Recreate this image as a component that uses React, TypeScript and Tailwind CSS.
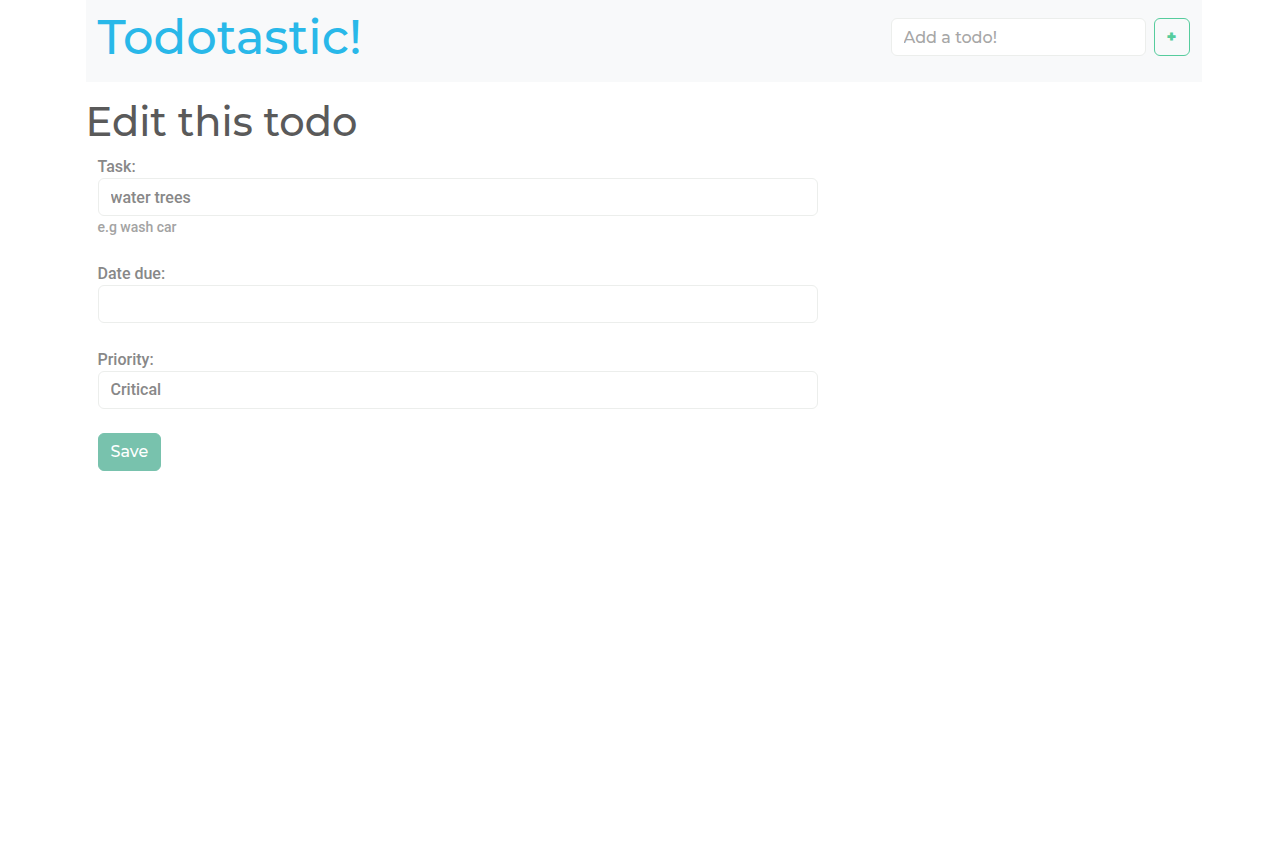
import { useState } from "react";
import type { ReactNode } from "react";

const control =
  "block h-[38px] w-full appearance-none rounded-md border border-[#eceeec] bg-white px-3 font-['Roboto',sans-serif] text-base font-medium text-[#888888] outline-none focus:border-[#78c2ad]";

function Field({ id, label, hint, children }: { id: string; label: string; hint?: string; children: ReactNode }) {
  return (
    <div className="mb-6 font-['Roboto',sans-serif]">
      <label htmlFor={id} className="block h-6 text-base leading-[26px] font-medium text-[#888888]">
        {label}
      </label>
      {children}
      {hint && <p className="h-[21px] text-sm leading-[23px] font-medium text-[#a3a3a3]">{hint}</p>}
    </div>
  );
}

export default function App() {
  const [task, setTask] = useState("water trees");
  const [due, setDue] = useState("");
  const [priority, setPriority] = useState("Critical");

  return (
    <div className="mx-auto w-full max-w-[1140px] px-3 font-['Montserrat','Inter',sans-serif] text-base">
      <header className="flex items-start justify-between bg-[#f8f9fa] px-3 pt-2 pb-4">
        <h1 className="text-5xl leading-[58px] font-medium text-[#29b8e9]">
          <a href="#">Todotastic!</a>
        </h1>
        <form className="flex gap-2 pt-2.5" onSubmit={(e) => e.preventDefault()}>
          <input
            aria-label="Add a todo!"
            placeholder="Add a todo!"
            className="h-[38px] w-[255px] rounded-md border border-[#eceeec] bg-white px-3 text-base font-medium outline-none placeholder:text-[#a6a6a6]"
          />
          <button
            aria-label="Add"
            className="h-[38px] w-9 rounded-md border border-[#56cc9d] text-base font-black text-[#56cc9d]"
          >
            +
          </button>
        </form>
      </header>
      <main>
        <h2 className="mt-4 mb-2 text-[40px] leading-12 font-medium text-[#5a5a5a]">Edit this todo</h2>
        <form className="w-full px-3 md:w-2/3" onSubmit={(e) => e.preventDefault()}>
          <Field id="task" label="Task:" hint="e.g wash car">
            <input id="task" className={control} value={task} onChange={(e) => setTask(e.target.value)} />
          </Field>
          <Field id="due" label="Date due:">
            <input id="due" className={control} value={due} onChange={(e) => setDue(e.target.value)} />
          </Field>
          <Field id="priority" label="Priority:">
            <select id="priority" className={control} value={priority} onChange={(e) => setPriority(e.target.value)}>
              <option>Critical</option>
            </select>
          </Field>
          <button className="h-[38px] rounded-md border border-[#78c2ad] bg-[#78c2ad] px-3 text-base font-medium text-white">
            Save
          </button>
        </form>
      </main>
    </div>
  );
}
